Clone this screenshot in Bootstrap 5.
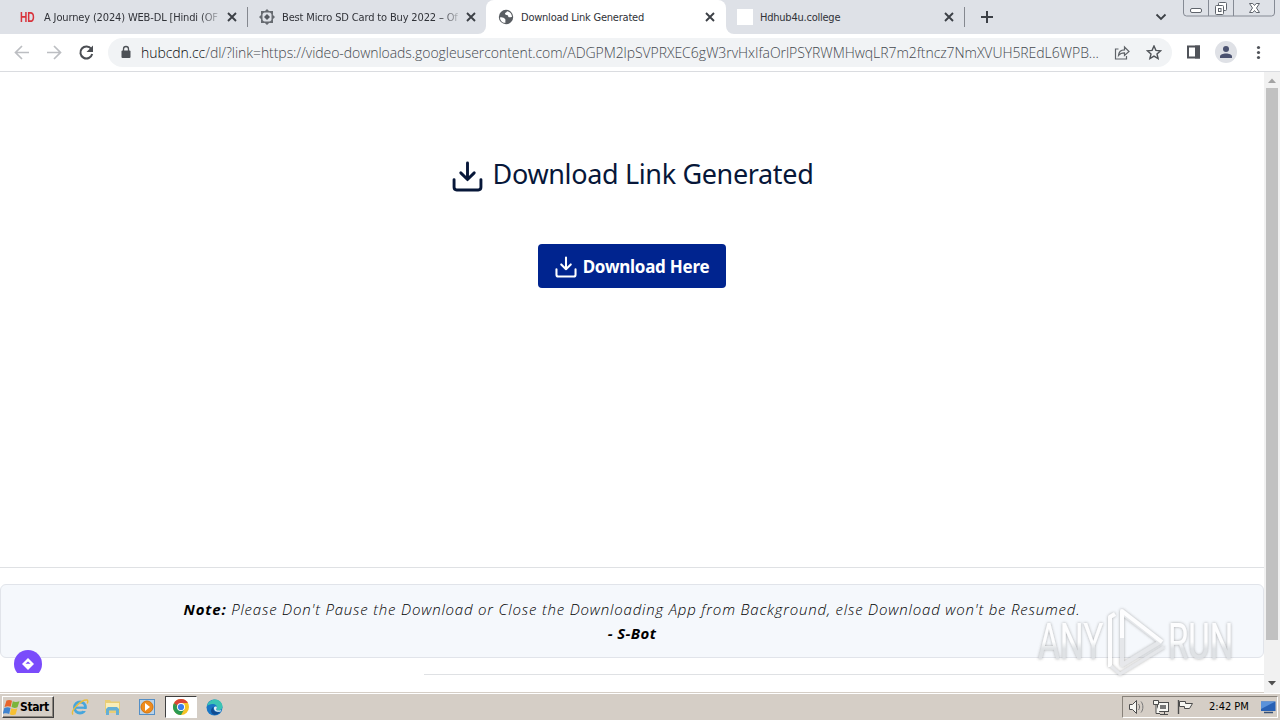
<!doctype html>
<html lang="en">
  <head>
    <meta charset="UTF-8" />
    <meta name="viewport" content="width=device-width, initial-scale=1.0" />
    <title>Download Link Generated</title>
    <!-- Bootstrap 5.3 CSS -->
    <link
      href="https://cdn.jsdelivr.net/npm/bootstrap@5.3.0/dist/css/bootstrap.min.css"
      rel="stylesheet"
    />
    <style>
      body {
        width: 1280px;
        height: 720px;
        font-family: "DejaVu Sans Condensed", "DejaVu Sans", sans-serif;
        line-height: 1.5;
      }
      svg {
        display: block;
        flex: none;
      }
      /* tab strip */
      .tab-strip {
        height: 34px;
        background: #dee1e7;
        font-size: 11px;
        font-stretch: condensed;
        letter-spacing: -0.23px;
        color: #303238;
      }
      .tab-item {
        height: 34px;
        flex: none;
        padding-right: 10px;
      }
      .tab-title {
        white-space: nowrap;
        line-height: 35px;
      }
      .tab-fade {
        letter-spacing: -0.15px;
        -webkit-mask-image: linear-gradient(90deg, #000 90%, transparent 103%);
        mask-image: linear-gradient(90deg, #000 90%, transparent 103%);
      }
      .tab-active {
        background: #fff;
        border-radius: 8px 8px 0 0;
      }
      .tab-curve-left {
        border-bottom-right-radius: 8px;
        background: #dee1e7;
      }
      .strip-edge {
        background: linear-gradient(#fff, #fff) 478px 26px / 256px 8px no-repeat #dee1e7;
      }
      .tab-sep {
        width: 1px;
        height: 20px;
        background: #85888f;
      }
      .hd-icon {
        width: 16px;
        font: bold 15px/17px "Liberation Sans", sans-serif;
        letter-spacing: 0;
        margin-top: -1px;
        color: #d8333c;
      }
      .hd-icon span {
        display: inline-block;
        transform: scaleX(0.68);
        transform-origin: 0 50%;
      }
      /* toolbar */
      .toolbar {
        height: 38px;
        background: #fff;
        border-bottom: 1px solid #dadce0;
      }
      .omnibox {
        width: 1064px;
        height: 29px;
        border-radius: 15px;
        background: #f1f3f5;
        padding-left: 11px;
      }
      .url-text {
        width: 961px;
        white-space: nowrap;
        font-family: "Open Sans", sans-serif;
        font-weight: 300;
        font-size: 14px;
        letter-spacing: -0.06px;
        color: #45494f;
      }
      .url-text span {
        color: #08090b;
      }
      /* page */
      .viewport {
        height: 621px;
      }
      .page-body {
        width: 1264px;
        overflow: hidden;
      }
      .page-title {
        height: 37px;
        font-family: "Noto Sans", sans-serif;
        font-size: 27px;
        letter-spacing: -0.35px;
        font-weight: 400;
        line-height: 34px;
        color: #071739;
      }
      .hero {
        height: 495px;
        padding-top: 83px;
      }
      .btn-get {
        width: 188px;
        height: 44px;
        margin-top: 52px;
        background: #00248f;
        color: #fff;
        border-radius: 4px;
        font: bold 17px "Noto Sans", sans-serif;
        letter-spacing: -0.25px;
      }
      .note-box {
        height: 74px;
        margin-top: 16px;
        border: 1px solid #e1e4ea;
        border-radius: 6px;
        background: #f5f8fc;
        color: #000;
        font: italic 300 15px/24px "Open Sans", sans-serif;
        padding-top: 12px;
      }
      .note-line {
        letter-spacing: 0.81px;
      }
      .note-sign {
        letter-spacing: 0.4px;
      }
      .rule-line {
        height: 1px;
        background: #dfe1e4;
      }
      .scroll-track {
        width: 16px;
        background: #f1f1f1;
      }
      .scroll-thumb {
        width: 12px;
        height: 552px;
        background: #c1c1c1;
      }
      .chat-bubble {
        left: 14px;
        top: 650px;
        width: 28px;
        height: 23px;
        overflow: hidden;
      }
      .watermark {
        left: 1030px;
        top: 600px;
      }
      /* taskbar */
      .taskbar {
        height: 27px;
        background: #d5cec6;
        border-top: 1px solid #fff;
        box-shadow: 0 -1px 0 #d5cec6;
        font-stretch: condensed;
        color: #000;
      }
      .start-btn {
        width: 52px;
        height: 22px;
        border: 1px solid;
        border-color: #fff #404040 #404040 #fff;
        box-shadow: inset -1px -1px 0 #8c867e;
        font-weight: bold;
        font-size: 12px;
        letter-spacing: -0.4px;
      }
      .task-on {
        width: 32px;
        height: 22px;
        background: #fff;
        border: 1px solid;
        border-color: #404040 #fff #fff #404040;
      }
      .tray {
        width: 156px;
        height: 22px;
        border: 1px solid;
        border-color: #88827a #fff #fff #88827a;
        font-size: 11px;
      }
    </style>
  </head>
  <body class="position-relative overflow-hidden bg-white m-0">
    <svg width="0" height="0" class="position-absolute">
      <symbol id="close" viewBox="0 0 10 10">
        <path d="M1 1l8 8M9 1l-8 8" stroke="#3c4046" stroke-width="1.9" />
      </symbol>
      <symbol id="download" viewBox="0 0 30 30">
        <path
          d="M15 2v16M8.500 11.500L15 18l6.500-6.500M2 18v7.500a2.500 2.500 0 0 0 2.500 2.500h21a2.500 2.500 0 0 0 2.500-2.500V18"
          fill="none" stroke="currentColor" stroke-width="2.800" stroke-linecap="round" stroke-linejoin="round"
        />
      </symbol>
    </svg>

    <!-- Tabs -->
    <div class="tab-strip strip-edge d-flex align-items-start">
      <div class="d-flex" style="width: 486px">
        <div class="tab-curve-left d-flex w-100">
          <div class="tab-item d-flex align-items-center" style="width: 247px; padding-left: 20px">
            <span class="hd-icon"><span>HD</span></span>
            <span class="tab-title tab-fade" style="margin-left: 8px">A Journey (2024) WEB-DL [Hindi (OF</span>
            <svg class="ms-auto" width="10" height="10"><use href="#close" /></svg>
          </div>
          <div class="tab-sep align-self-center"></div>
          <div class="tab-item d-flex align-items-center" style="width: 238px; padding-left: 11px">
            <svg width="16" height="16" viewBox="0 0 16 16">
              <g fill="#666a70">
                <path d="M8 0l3.500 3.500h-7zM8 16l3.500-3.500h-7zM0 8l3.500-3.500v7zM16 8l-3.500-3.500v7z" />
                <path d="M2 2h4.500L2 6.500zM14 2v4.500L9.500 2zM2 14V9.500L6.500 14zM14 14H9.500L14 9.500z" />
              </g>
              <path d="M8 4l4 4-4 4-4-4z" fill="#dee1e7" />
              <path d="M8 5l3 3-3 3-3-3z" fill="#555960" />
            </svg>
            <span class="tab-title tab-fade" style="margin-left: 7px">Best Micro SD Card to Buy 2022 – Of</span>
            <svg class="ms-auto" width="10" height="10"><use href="#close" /></svg>
          </div>
        </div>
      </div>
      <div class="tab-item tab-active d-flex align-items-center" style="width: 240px; padding-left: 12px; padding-right: 11px">
        <svg width="16" height="16" viewBox="0 0 16 16">
          <circle cx="8" cy="8" r="7.200" fill="#595d62" />
          <path d="M2 8.500c2.500-.5 4 .5 5 1.500 1 .8 0 1.800.5 3.800-3 .3-5.500-2.300-5.500-5.300zM9 2.200c-.3 1.500-1.500 1-2 2.300-.3 1.200 1.200 1.500 2.500 1.700 1 .2.300 1.800 1.500 2 1.300.3 2-.5 3-.2 0-3-2-5.500-5-5.800z" fill="#fff" />
        </svg>
        <span class="tab-title" style="margin-left: 7px">Download Link Generated</span>
        <svg class="ms-auto" width="10" height="10"><use href="#close" /></svg>
      </div>
      <div class="tab-item d-flex align-items-center" style="width: 238px; padding-left: 11px; background: #dee1e7; border-bottom-left-radius: 8px">
        <span class="bg-white flex-shrink-0" style="width: 16px; height: 16px"></span>
        <span class="tab-title" style="margin-left: 7px">Hdhub4u.college</span>
        <svg class="ms-auto" width="10" height="10"><use href="#close" /></svg>
      </div>
      <div class="tab-sep align-self-center"></div>
      <svg class="align-self-center" width="12" height="12" viewBox="0 0 12 12" style="margin-left: 16px">
        <path d="M6 0v12M0 6h12" stroke="#3c4046" stroke-width="2" />
      </svg>
      <svg class="align-self-center ms-auto" width="12" height="8" viewBox="0 0 12 8" style="margin-right: 16px">
        <path d="M1.500 1.500L6 6l4.500-4.500" fill="none" stroke="#3c4046" stroke-width="1.800" />
      </svg>
      <svg width="92" height="17" viewBox="0 0 92 17" style="margin-right: 5px">
        <path d="M.5 0v13a3 3 0 0 0 3 3h85a3 3 0 0 0 3-3V0M25.500 0v16M50.500 0v16" fill="none" stroke="#858a94" />
        <g fill="#fff" stroke="#5f646c">
          <rect x="7.500" y="8.500" width="11" height="4" rx="1.500" />
          <rect x="35.500" y="2.500" width="8" height="8" rx="1" />
          <rect x="32.500" y="5.500" width="8" height="9" rx="1" />
          <rect x="35.500" y="8.500" width="2.500" height="3" />
          <path d="M66.500 3.500h3.300l1.700 2 1.700-2h3.300L73.500 8l3 4.500h-3.300l-1.700-2-1.700 2h-3.300l3-4.500z" />
        </g>
      </svg>
    </div>

    <!-- Toolbar -->
    <div class="toolbar d-flex align-items-center">
      <svg width="108" height="36" viewBox="0 0 108 36">
        <g fill="none" stroke="#bcbec2" stroke-width="1.700">
          <path d="M29 17.500H16M22 11l-6.500 6.500L22 24" />
          <path d="M47 17.500h13M54 11l6.500 6.500L54 24" />
        </g>
        <path d="M91.300 14a6 6 0 1 0 .9 5" fill="none" stroke="#4b4e53" stroke-width="2" />
        <path d="M93 10.500V17h-6.500z" fill="#4b4e53" />
      </svg>
      <div class="omnibox d-flex align-items-center">
        <svg width="14" height="16" viewBox="0 0 14 16">
          <rect x="2.500" y="5.500" width="9" height="7.500" rx="1" fill="#4d5156" />
          <path d="M4.500 6V4a2.500 2.500 0 0 1 5 0v2" fill="none" stroke="#4d5156" stroke-width="1.300" />
        </svg>
        <div class="url-text" style="margin-left: 8px"><span>hubcdn.cc</span>/dl/?link=https://video-downloads.googleusercontent.com/ADGPM2lpSVPRXEC6gW3rvHxIfaOrlPSYRWMHwqLR7m2ftncz7NmXVUH5REdL6WPB...</div>
        <svg width="16" height="16" viewBox="0 0 16 16" style="margin-left: 12px">
          <path d="M4.500 4h-3v10h11v-3M4.500 10.500c.3-4 2.500-5.700 6-5.700V2L15 6.500l-4.500 4V7.800c-3 0-4.500.7-6 2.700z" fill="none" stroke="#5f6368" stroke-width="1.200" />
        </svg>
        <svg width="16" height="16" viewBox="0 0 16 16" style="margin-left: 16px">
          <path d="M8 1l1.900 4.400 4.700.4-3.600 3.100 1.100 4.700L8 11.100l-4.100 2.500L5 8.900 1.400 5.800l4.700-.4z" fill="none" stroke="#4f5358" stroke-width="1.400" />
        </svg>
      </div>
      <svg width="108" height="36" viewBox="0 0 108 36">
        <path d="M16 11.500h11v11H16z" fill="#fff" stroke="#505359" stroke-width="2" />
        <path d="M23 10.500h5v13h-5z" fill="#505359" />
        <circle cx="54" cy="17" r="11" fill="#dfe1e6" />
        <circle cx="54" cy="14" r="3" fill="#4b5270" />
        <path d="M48 23v-1.500c0-2 3-3 6-3s6 1 6 3V23z" fill="#4b5270" />
        <g fill="#505359">
          <circle cx="86.500" cy="12.500" r="1.600" />
          <circle cx="86.500" cy="17.500" r="1.600" />
          <circle cx="86.500" cy="22.500" r="1.600" />
        </g>
      </svg>
    </div>

    <!-- Page -->
    <div class="viewport d-flex">
      <main class="page-body">
        <section class="hero d-flex flex-column align-items-center">
          <h1 class="page-title d-flex align-items-center m-0">
            <svg width="31" height="31" style="margin: 6px 10px 0 1px"><use href="#download" /></svg>
            <span>Download Link Generated</span>
          </h1>
          <a class="btn-get d-flex align-items-center justify-content-center text-decoration-none">
            <svg width="22" height="22" style="margin: 2px 6px 0 0"><use href="#download" /></svg>
            <span>Download Here</span>
          </a>
        </section>
        <div class="rule-line"></div>
        <div class="note-box text-center">
          <div class="note-line"><span class="fw-bold">Note:</span> Please Don't Pause the Download or Close the Downloading App from Background, else Download won't be Resumed.</div>
          <div class="note-sign fw-bold">- S-Bot</div>
        </div>
        <div class="rule-line ms-auto" style="width: 840px; margin-top: 16px"></div>
      </main>
      <div class="scroll-track d-flex flex-column align-items-center">
        <svg width="16" height="16"><path d="M4 11l4-4.500 4 4.500z" fill="#a3a3a3" /></svg>
        <div class="scroll-thumb"></div>
        <svg class="mt-auto" width="16" height="17"><path d="M4 5h8l-4 4.500z" fill="#505050" /></svg>
      </div>
    </div>

    <!-- Taskbar -->
    <footer class="taskbar d-flex align-items-center">
      <div class="start-btn d-flex align-items-center" style="margin-left: 2px">
        <svg width="17" height="17" viewBox="0 0 17 17">
          <path d="M3.500 1.500c2-1 4-.7 5.500.2L7.700 7.800C6 7 4 7 1.500 7.900z" fill="#e8642b" />
          <path d="M9.800 2.200c2 1 4 .8 6.700 0L14.500 8.300c-2 .8-4.200.8-6-.2z" fill="#7bb53c" />
          <path d="M1.300 8.900c2.500-.8 4.300-.8 6.200.1L6.200 15c-1.700-1-4-1-6.500-.2z" fill="#3f83cf" />
          <path d="M8.300 9.300c1.800.8 4 1 6 .3l-1.700 6c-2 .8-4 .5-5.800-.4z" fill="#f6c033" />
        </svg>
        <span>Start</span>
      </div>
      <svg width="18" height="18" viewBox="0 0 18 18" style="margin-left: 17px">
        <circle cx="9" cy="9.500" r="5.500" fill="none" stroke="#47a6dc" stroke-width="2.800" />
        <path d="M5 9.700h10" stroke="#47a6dc" stroke-width="2.200" />
        <path d="M12 11h5v2h-5z" fill="#d5cec6" />
        <path d="M2 16.500C-1 13 10 1.500 16 2c1 .2 1 2 .2 3.500" fill="none" stroke="#e9bd3c" stroke-width="1.400" />
      </svg>
      <svg width="18" height="18" viewBox="0 0 18 18" style="margin-left: 15px">
        <path d="M1 2h5l1 1.500h9V15H1z" fill="#e9cd75" />
        <path d="M2 5h13v6H2z" fill="#f9edb8" />
        <path d="M2 17v-6l2-2h9l2 2v6h-3v-4.500H5V17z" fill="#64afd5" />
      </svg>
      <svg width="16" height="16" viewBox="0 0 16 16" style="margin-left: 17px">
        <rect x=".5" y=".5" width="15" height="15" fill="#b9d2e8" stroke="#548fc6" />
        <circle cx="8" cy="8" r="6" fill="#ef8b1c" stroke="#d4740c" />
        <path d="M6 4l5 4-5 4z" fill="#fff" />
      </svg>
      <div class="task-on d-flex align-items-center justify-content-center" style="margin-left: 10px">
        <svg width="16" height="16" viewBox="0 0 16 16">
          <circle cx="8" cy="8" r="8" fill="#f6c326" />
          <path d="M1.070 4a8 8 0 0 1 13.860 0H8z" fill="#dc4437" />
          <path d="M1.070 4A8 8 0 0 0 8 16l3.460-6-6.920 0z" fill="#2b9a52" />
          <path d="M1.070 4L4.540 10 8 4.400V3.500z" fill="#dc4437" />
          <path d="M1.070 4L4.540 10 5 7z" fill="#2b9a52" />
          <circle cx="8" cy="8" r="4" fill="#fff" />
          <circle cx="8" cy="8" r="3.100" fill="#3b7ded" />
        </svg>
      </div>
      <svg width="17" height="17" viewBox="0 0 17 17" style="margin-left: 9px">
        <circle cx="8.500" cy="8.500" r="8" fill="#1976c5" />
        <path d="M1 7C2 2.500 6 .3 9.500.6c4.500.4 7 4 7 7 0 3-2.500 4-4.500 3.800-2-.2-1.500-1.200-1-2C11.500 7 9.500 5 6.500 5 4 5 2 6 1 7z" fill="#3bc4b4" />
        <path d="M7.500 8c-1 3 1.500 6.200 6.500 4.800-1.500 2.500-4.500 3.400-6.500 2.600C4 14 4.500 9 7.500 8z" fill="#114b91" />
        <path d="M8 8.500c.5-1 2-1.200 2.700-.5.500 1-.7 1.800-.4 2.700.3 1 3.200 1.300 5 .3l-.7 1.500c-3.500 1.200-7.200-.8-6.600-4z" fill="#e6f1f4" />
      </svg>
      <div class="tray d-flex align-items-center ms-auto" style="margin-right: 2px">
        <svg width="80" height="20" viewBox="0 0 80 20">
          <g stroke="#4c4c4c" fill="#f6f6f2">
            <path d="M6.500 7.500h3l4-4v13l-4-4h-3z" />
            <path d="M15.500 7c1.500 2 1.500 4 0 6M18 4.500c2.500 3 2.500 8 0 11" fill="none" stroke="#777" />
            <rect x="34.500" y="5.500" width="11" height="9" />
            <path d="M37 17.500h8M41.500 15v2" />
            <path d="M30.500 3.500h5v4h-5zM33 7.500v9h4" />
            <path d="M55.500 3v14" stroke-width="1.400" />
            <path d="M56.500 4.500h6v2h7l-3 5h-5v-2h-5z" />
          </g>
          <path d="M37 8h6v4h-6z" fill="#777" />
        </svg>
        <span style="margin: 1px 0 0 6px">2:42 PM</span>
        <svg class="ms-auto" width="17" height="16" viewBox="0 0 17 16">
          <path d="M1 2.500h14.500V12H1z" fill="#2861b5" />
          <path d="M1 2.500h14.500L1 10z" fill="#5a92da" />
          <path d="M4 13.500h9" stroke="#375177" stroke-width="1.500" />
        </svg>
      </div>
    </footer>

    <!-- Overlays -->
    <div class="chat-bubble position-absolute">
      <svg width="28" height="28" viewBox="0 0 28 28">
        <circle cx="14" cy="14" r="14" fill="#7a4bfb" />
        <path d="M14 8l6 6-6 6-6-6z" fill="#fff" />
        <path d="M11.500 13.700L14 11.500l2.500 2.200z" fill="#7a4bfb" />
      </svg>
    </div>
    <svg class="watermark position-absolute" width="250" height="84" viewBox="0 0 250 84">
      <defs>
        <linearGradient id="fade" x1="0" y1="0" x2="0" y2="1">
          <stop offset=".5" stop-color="#fff" />
          <stop offset=".62" stop-color="#dcdfe2" />
        </linearGradient>
        <filter id="soft" x="-10%" y="-20%" width="120%" height="140%">
          <feDropShadow dx="0" dy="0" stdDeviation="1.800" flood-color="#666" flood-opacity=".65" />
        </filter>
      </defs>
      <g filter="url(#soft)" opacity=".85">
        <g font-family="Roboto, sans-serif" font-size="50" fill="url(#fade)">
          <text transform="translate(8 59) scale(.67 1)">ANY</text>
          <text transform="translate(138 59) scale(.66 1)">RUN</text>
        </g>
        <g fill="none" stroke-width="4" stroke-linejoin="round">
          <path d="M80 67V17l5-3" stroke="#fff" />
          <path d="M92 13v52l38-23z" stroke="#e3e5e8" />
          <path d="M92 38V11l40 31" stroke="#fff" />
          <path d="M81 66l9 8 44-27" stroke="#e3e5e8" stroke-width="3" />
        </g>
      </g>
    </svg>

    <script src="https://cdn.jsdelivr.net/npm/bootstrap@5.3.0/dist/js/bootstrap.bundle.min.js"></script>
  </body>
</html>
